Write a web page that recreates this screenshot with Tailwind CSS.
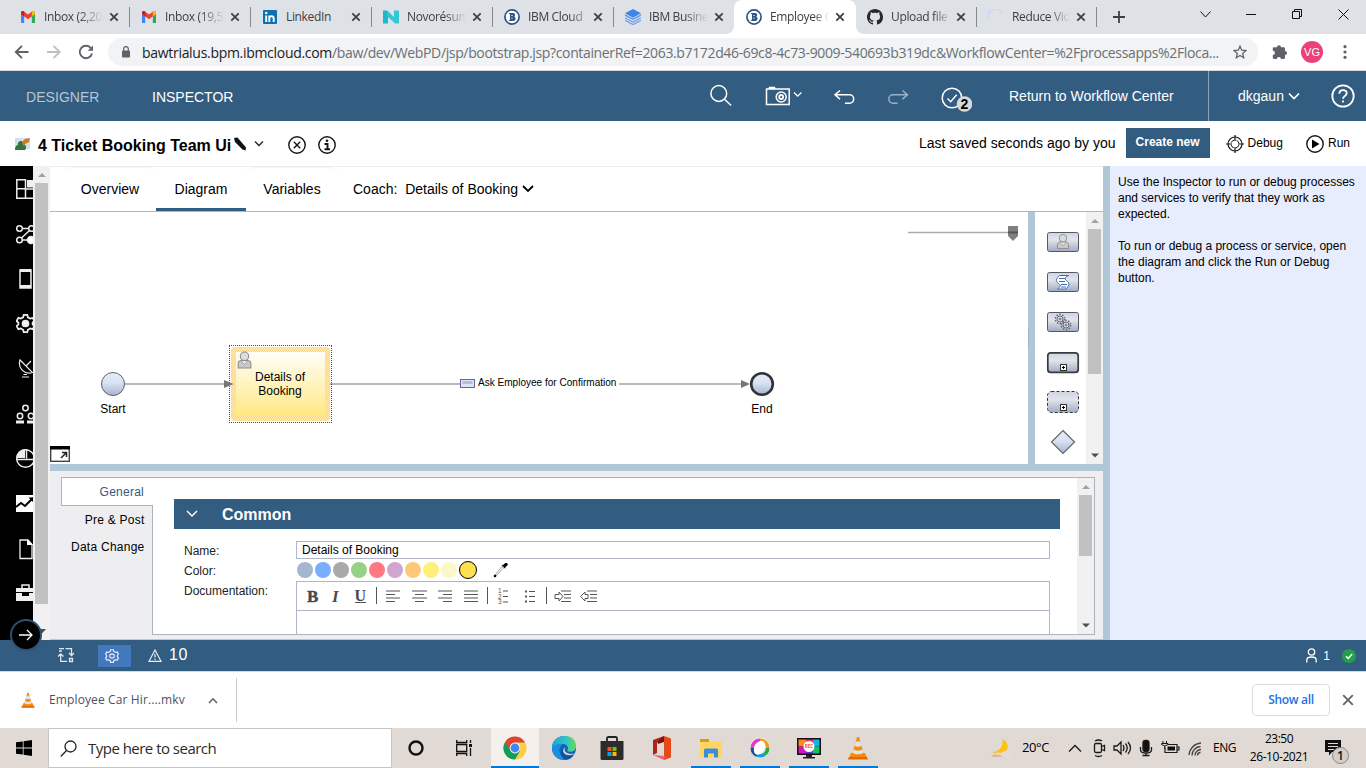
<!DOCTYPE html>
<html lang="en">
<head>
<meta charset="utf-8">
<title>Employee Car Hire</title>
<script src="https://cdn.jsdelivr.net/npm/@tailwindcss/browser@4"></script>
</head>
<body class="w-[1366px] h-[768px] overflow-hidden bg-white font-['Liberation_Sans',sans-serif] text-black">
<svg class="absolute size-0">
  <symbol id="gmail" viewBox="0 0 16 16"><path d="M1 14V4l3.2 2.4V14z" fill="#4285f4"/><path d="M11.800 14V6.400L15 4v10z" fill="#34a853"/><path d="M1 5V3.500C1 2 2.800 1.500 4 2.400L8 5.400l4-3C13.200 1.500 15 2 15 3.500V5L8 10.200z" fill="#ea4335"/><path d="M11.800 2.500C13.200 1.500 15 2 15 3.500V5l-3.200 2.400z" fill="#fbbc04"/><path d="M1 5V3.500C1 2 2.800 1.500 4.200 2.500v4.900z" fill="#c5221f"/></symbol>
  <symbol id="x" viewBox="0 0 10 10"><path d="M1.300 1.300l7.400 7.400M8.700 1.300L1.300 8.700" stroke="currentColor" stroke-width="1.800" fill="none"/></symbol>
  <symbol id="bpm" viewBox="0 0 16 16"><circle cx="8" cy="8" r="7.100" fill="#fff" stroke="#2f5486" stroke-width="1.700"/><path d="M4.500 4h4.400a2.100 2.100 0 0 1 1.500 3.700A2.300 2.300 0 0 1 9.300 12H4.500l1.500-1.500V5.500z" fill="#2f5486"/><path d="M7 6.500h2M7 9.200h2" stroke="#fff" stroke-width=".6"/></symbol>
  <symbol id="cone" viewBox="0 0 24 24"><path d="M5 17h14l2.500 6h-19z" fill="#f58a0b"/><path d="M3 21h18l1 2.500H2z" fill="#e06a00"/><path d="M11 1h2l5 18c-3 2-9 2-12 0z" fill="#f58a0b"/><path d="M9.700 5.500h4.600l1.200 4.500c-2 1-5 1-7 0zM7.600 13.500c3 1.500 6 1.500 8.800 0l1 3.500c-3 1.800-8 1.800-10.800 0z" fill="#dfe3e8"/></symbol>
  <symbol id="user" viewBox="0 0 14 17"><path d="M1 16v-4c0-2 1.500-3 3.500-3h5c2 0 3.500 1 3.500 3v4z" fill="#c9c9c9" stroke="#8b8b8b"/><path d="M4 9.500L7 13l3-3.500" fill="#e6e6e6" stroke="#999" stroke-width=".7"/><circle cx="7" cy="5" r="4" fill="#dcdcdc" stroke="#8b8b8b"/></symbol>
  <symbol id="gear" viewBox="0 0 16 16"><circle cx="8" cy="8" r="2.500"/><path d="M6.500.8h3l.5 2 2 1.100 2-.6 1.500 2.600L14 7.300v1.500l1.500 1.400-1.500 2.600-2-.6-2 1.100-.5 2h-3l-.5-2-2-1.100-2 .6L.5 10.200 2 8.800V7.300L.5 5.900 2 3.300l2 .6 2-1.100z"/></symbol>
  <linearGradient id="ev" x1="0" y1="0" x2="0" y2="1"><stop offset="0" stop-color="#e6edf9"/><stop offset=".45" stop-color="#d8e2f2"/><stop offset="1" stop-color="#a5b4cd"/></linearGradient>
</svg>

<!-- tab strip -->
<div class="flex h-[34px] bg-[#dee1e6] pl-2 font-['Open_Sans',sans-serif] text-[12px] tracking-[-0.35px] text-[#3c4043]">
  <div class="flex w-[121px] items-center pl-[12px] relative"><svg class="size-4 shrink-0"><use href="#gmail"/></svg><span class="ml-2 mr-[3px] w-[59px] overflow-hidden whitespace-nowrap [mask-image:linear-gradient(to_right,black_60%,transparent)]">Inbox (2,20</span><svg class="size-[10px] shrink-0 ml-[3px]"><use href="#x"/></svg></div>
  <div class="flex w-[121px] items-center pl-[12px] relative"><i class="absolute left-0 top-[7px] h-5 w-px bg-[#85898e]"></i><svg class="size-4 shrink-0"><use href="#gmail"/></svg><span class="ml-2 mr-[3px] w-[59px] overflow-hidden whitespace-nowrap [mask-image:linear-gradient(to_right,black_60%,transparent)]">Inbox (19,5</span><svg class="size-[10px] shrink-0 ml-[3px]"><use href="#x"/></svg></div>
  <div class="flex w-[121px] items-center pl-[12px] relative"><i class="absolute left-0 top-[7px] h-5 w-px bg-[#85898e]"></i><svg class="size-4 shrink-0" viewBox="0 0 16 16"><rect x="1" y="1" width="14" height="14" rx="1" fill="#0a72b1"/><path d="M4.200 6.500V13M7.300 13V6.500M7.300 9.500c0-3 4.400-3 4.400 0V13" stroke="#fff" stroke-width="1.900" fill="none"/><circle cx="4.200" cy="4" r="1.200" fill="#fff"/></svg><span class="ml-2 w-[62px] overflow-hidden whitespace-nowrap">LinkedIn</span><svg class="size-[10px] shrink-0 ml-[3px]"><use href="#x"/></svg></div>
  <div class="flex w-[121px] items-center pl-[12px] relative"><i class="absolute left-0 top-[7px] h-5 w-px bg-[#85898e]"></i><svg class="size-4 shrink-0" viewBox="0 0 16 16"><path d="M0 1.500h4L8.500 6v5L5 8v6.500H0z" fill="#21b8ce"/><path d="M16 14.500h-4L4 6.500V1.500L11 8V1.500h5z" fill="#35c6d6"/></svg><span class="ml-2 mr-[3px] w-[59px] overflow-hidden whitespace-nowrap [mask-image:linear-gradient(to_right,black_65%,transparent)]">Novorésum</span><svg class="size-[10px] shrink-0 ml-[3px]"><use href="#x"/></svg></div>
  <div class="flex w-[121px] items-center pl-[12px] relative"><i class="absolute left-0 top-[7px] h-5 w-px bg-[#85898e]"></i><svg class="size-4 shrink-0"><use href="#bpm"/></svg><span class="ml-2 mr-[3px] w-[59px] overflow-hidden whitespace-nowrap [mask-image:linear-gradient(to_right,black_70%,transparent_110%)]">IBM Cloud</span><svg class="size-[10px] shrink-0 ml-[3px]"><use href="#x"/></svg></div>
  <div class="flex w-[121px] items-center pl-[12px] relative"><i class="absolute left-0 top-[7px] h-5 w-px bg-[#85898e]"></i><svg class="size-4 shrink-0" viewBox="0 0 16 16"><path d="M0 11.200l8 4.300 8-4.300M0 8.700L8 13l8-4.300" fill="none" stroke="#6aa0ec" stroke-width="1.300"/><path d="M8 0l8 4.300-8 4.400L0 4.300z" fill="#3f86e6"/><path d="M0 6l8 4.300L16 6" fill="none" stroke="#4d90e8" stroke-width="1.300"/></svg><span class="ml-2 mr-[3px] w-[59px] overflow-hidden whitespace-nowrap [mask-image:linear-gradient(to_right,black_60%,transparent)]">IBM Busine</span><svg class="size-[10px] shrink-0 ml-[3px]"><use href="#x"/></svg></div>
  <div class="flex w-[122px] items-center pl-[12px] relative rounded-t-lg bg-white"><svg class="absolute -left-2 bottom-0 size-2"><path d="M8 0v8H0a8 8 0 0 0 8-8" fill="#fff"/></svg><svg class="absolute -right-2 bottom-0 size-2"><path d="M0 0v8h8a8 8 0 0 1-8-8" fill="#fff"/></svg><svg class="size-4 shrink-0"><use href="#bpm"/></svg><span class="ml-2 mr-[3px] w-[59px] overflow-hidden whitespace-nowrap [mask-image:linear-gradient(to_right,black_75%,transparent_100%)]">Employee C</span><svg class="size-[10px] shrink-0 ml-[3px]"><use href="#x"/></svg></div>
  <div class="flex w-[120px] items-center pl-[11px] relative"><svg class="size-4 shrink-0" viewBox="0 0 16 16"><path fill="#24292f" d="M8 0C3.580 0 0 3.580 0 8c0 3.540 2.290 6.530 5.470 7.590.4.070.55-.17.55-.38 0-.19-.01-.82-.01-1.490-2.010.37-2.530-.49-2.690-.94-.09-.23-.48-.94-.82-1.130-.28-.15-.68-.52-.01-.53.63-.01 1.080.58 1.230.82.72 1.210 1.870.87 2.330.66.07-.52.28-.87.51-1.070-1.780-.2-3.640-.89-3.640-3.950 0-.87.31-1.590.82-2.150-.08-.2-.36-1.020.08-2.120 0 0 .67-.21 2.200.82.64-.18 1.320-.27 2-.27s1.360.09 2 .27c1.530-1.040 2.200-.82 2.200-.82.44 1.100.16 1.920.08 2.120.51.56.82 1.270.82 2.150 0 3.070-1.870 3.750-3.650 3.950.29.25.54.73.54 1.480 0 1.070-.01 1.930-.01 2.200 0 .21.15.46.55.38A8.010 8.010 0 0 0 16 8c0-4.420-3.580-8-8-8"/></svg><span class="ml-2 mr-[5px] w-[57px] overflow-hidden whitespace-nowrap [mask-image:linear-gradient(to_right,black_75%,transparent_105%)]">Upload file</span><svg class="size-[10px] shrink-0 ml-[3px]"><use href="#x"/></svg></div>
  <div class="flex w-[121px] items-center pl-[12px] relative"><i class="absolute left-0 top-[7px] h-5 w-px bg-[#85898e]"></i><i class="absolute right-0 top-[7px] h-5 w-px bg-[#85898e]"></i><svg class="size-4 shrink-0" viewBox="0 0 16 16"><path d="M.8 10A7.200 7.200 0 0 1 14 4" fill="none" stroke="#c6d6fb" stroke-width="1.400"/></svg><span class="ml-2 mr-[3px] w-[58px] overflow-hidden whitespace-nowrap [mask-image:linear-gradient(to_right,black_65%,transparent)]">Reduce Vid</span><svg class="size-[10px] shrink-0 ml-[3px]"><use href="#x"/></svg></div>
  <svg class="size-3 mt-[11px] ml-4 shrink-0"><path d="M6 0v12M0 6h12" stroke="#3c4043" stroke-width="1.800"/></svg>
  <svg class="w-[152px] h-[34px] ml-[74px] shrink-0" fill="none" stroke="#111"><path d="M1.500 11.500l5 5.500 5-5.500M47 14.500h10M93.500 11.500h7v7h-7zM95.500 11.500v-2h7v7h-2M139.500 9.500l10 10M149.500 9.500l-10 10" /></svg>
</div>

<!-- address bar -->
<div class="flex h-9 items-center bg-white">
  <svg class="w-[108px] h-9 shrink-0" fill="none" stroke="#5f6368" stroke-width="1.900"><path d="M28.500 18h-12M22 11.800L15.800 18l6.200 6.200"/><path d="M47 18h12M53.500 11.800l6.200 6.200-6.200 6.200" stroke="#bdc1c6"/><path d="M91 14.300A6.200 6.200 0 1 0 92 19.500"/><path d="M93 11.500v5.300h-5.300z" fill="#5f6368" stroke="none"/></svg>
  <div class="flex h-7 w-[1150px] items-center rounded-full bg-[#f1f3f4] pl-[13px] font-['Open_Sans',sans-serif] text-[14px] text-[#6b6f74]">
    <svg class="w-[10px] h-3 shrink-0" viewBox="0 0 10 12"><rect x="1" y="4.500" width="8" height="7" rx="1" fill="#5f6368"/><path d="M2.700 5V3a2.300 2.300 0 0 1 4.600 0v2" fill="none" stroke="#5f6368" stroke-width="1.200"/></svg>
    <span class="ml-[11px] w-[1085px] whitespace-nowrap tracking-[-0.360px]"><span class="text-[#202124] tracking-[-0.300px]">bawtrialus.bpm.ibmcloud.com</span>/baw/dev/WebPD/jsp/bootstrap.jsp?containerRef=2063.b7172d46-69c8-4c73-9009-540693b319dc&amp;WorkflowCenter=%2Fprocessapps%2Floca...</span>
    <svg class="size-[14px] ml-[6px] shrink-0" viewBox="0 0 14 14"><path d="M7 1.200l1.700 4 4.300.4-3.300 2.900 1 4.200L7 10.500l-3.700 2.200 1-4.200L1 5.600l4.300-.4z" fill="none" stroke="#5f6368" stroke-width="1.300"/></svg>
  </div>
  <svg class="size-4 ml-[14px]" viewBox="0 0 16 16"><path d="M5 3.200a2 2 0 0 1 4 0h2.800c.8 0 1.200.5 1.200 1.200V7a2 2 0 0 1 0 4v2.800c0 .700-.5 1.200-1.200 1.200H9a2.100 2.100 0 0 0-4.200 0H2c-.700 0-1.200-.5-1.200-1.200V11a2.100 2.100 0 0 0 0-4.200V4.400c0-.700.5-1.200 1.200-1.200z" fill="#5f6368"/></svg>
  <div class="ml-[13px] flex size-[22px] items-center justify-center rounded-full bg-[#ec407a] text-[11px] text-white">VG</div>
  <svg class="w-1 h-4 ml-[20px]" fill="#5f6368"><circle cx="2" cy="2.700" r="1.600"/><circle cx="2" cy="8" r="1.600"/><circle cx="2" cy="13.300" r="1.600"/></svg>
</div>
<div class="h-px bg-[#d9dcdf]"></div>

<!-- application header -->
<div class="flex h-[50px] items-center bg-[#325c80] pl-[26px] text-[14px] text-white">
  <span class="mt-[2px] w-[126px] tracking-[0.050px] text-[#b7c6d3]">DESIGNER</span><span class="mt-[2px]">INSPECTOR</span>
  <svg class="ml-auto w-[270px] h-[50px] shrink-0" fill="none" stroke="#fff" stroke-width="1.500"><circle cx="16.800" cy="22.500" r="7.900"/><path d="M22.700 28.500l6.500 6"/><path d="M64.500 18h22.700v15.500H64.500zM67.500 18v-1.500h5V18" /><circle cx="79.200" cy="26" r="5"/><circle cx="79.200" cy="26" r="2" stroke-width="1.800"/><path d="M92 21.500l3.700 3.700 3.700-3.700" stroke-width="1.300"/><path d="M138 19.500l-5 4.300 5 4.300M133.500 23.800h14a4.200 4.200 0 0 1 0 8.400H143"/><path d="M200.500 19.500l5 4.300-5 4.300M205 23.800h-14a4.200 4.200 0 0 0 0 8.400H195.500" stroke="#9db1c2"/><circle cx="250" cy="27" r="9.800"/><path d="M245.500 27.500l3.200 3.200 6-7"/><circle cx="262.500" cy="33" r="7.800" fill="#d8d8d8" stroke="none"/><text x="262.500" y="37.700" text-anchor="middle" fill="#000" stroke="none" font-size="14" font-weight="bold">2</text></svg>
  <span class="ml-[37px] w-[199px] shrink-0">Return to Workflow Center</span>
  <div class="flex h-full w-[158px] shrink-0 items-center border-l border-[#8da4b7] pl-[29px]"><span>dkgaun</span><svg class="w-3 h-2 ml-1"><path d="M1 1.500l5 5 5-5" fill="none" stroke="#fff" stroke-width="1.700"/></svg>
  <svg class="size-6 ml-[31px]" viewBox="0 0 24 24" fill="none" stroke="#fff" stroke-width="1.800"><circle cx="12" cy="12" r="10.700"/><path d="M8.300 9.800c0-5 7.400-4.800 7.400-.6 0 2.800-3.700 2.600-3.700 5.500M12 16.500v2"/></svg></div>
</div>

<!-- title row -->
<div class="flex h-[45px] items-center pl-[15px]">
  <svg class="size-4" viewBox="0 0 16 16"><rect x="0" y="2" width="15" height="11" fill="#cfe0ef"/><path d="M0 14c0-4 2-5 3-5-1-4 5-6 6-1 2 1 3 4 1 6z" fill="#35733a"/><path d="M7 6l3-3 5-1-1 4-4 2-1 3z" fill="#d5771a"/></svg>
  <span class="ml-[7px] text-[16px] font-bold mt-[5px] whitespace-nowrap">4 Ticket Booking Team Ui</span>
  <svg class="w-3 h-4 ml-[3px] mt-px" viewBox="0 0 12 16"><path d="M0 2l3.500-.5 8.500 10-.5 3-3-1L1 6z" fill="#111"/></svg>
  <svg class="w-[10px] h-2 ml-[8px]"><path d="M1 1.500l4 4 4-4" fill="none" stroke="#222" stroke-width="1.300"/></svg>
  <svg class="w-[48px] h-[18px] ml-[24px] mt-[2px]" fill="none" stroke="#161616" stroke-width="1.400"><circle cx="9" cy="9" r="8.200"/><path d="M5.800 5.800l6.400 6.400M12.200 5.800l-6.400 6.400"/><circle cx="39" cy="9" r="8.200"/><path d="M36.500 8H39.500v5M36.500 13.200h5.500" stroke-width="1.900"/><circle cx="39" cy="4.800" r="1.300" fill="#161616" stroke="none"/></svg>
  <span class="ml-auto text-[14px] tracking-[0.020px]">Last saved seconds ago by you</span>
  <div class="-mt-[2px] ml-[10px] flex h-[30px] w-[84px] items-center justify-center bg-[#325c80] pb-[2px] text-[12px] font-bold text-white">Create new</div>
  <svg class="size-[18px] ml-[16px]" viewBox="0 0 18 18" fill="none" stroke="#161616"><circle cx="9" cy="9" r="7" stroke-width="1.200"/><circle cx="9" cy="9" r="4" stroke-dasharray="4 2.280" stroke-dashoffset="-1.100"/><path d="M9 0v6M9 12v6M0 9h6M12 9h6" stroke-width="1.200"/></svg>
  <span class="-mt-[2px] ml-1 text-[12px]">Debug</span>
  <svg class="size-[18px] ml-[23px]" viewBox="0 0 18 18"><circle cx="9" cy="9" r="8.200" fill="none" stroke="#161616" stroke-width="1.400"/><path d="M6 4.500v9L13.500 9z" fill="#000"/></svg>
  <span class="-mt-[2px] ml-1 mr-[16px] text-[12px]">Run</span>
</div>

<!-- workspace -->
<div class="flex h-[474px] relative">
  <svg class="w-[33px] h-full shrink-0 bg-black" fill="none" stroke="#ededed" stroke-width="1.500">
    <path d="M16.800 13.800h8.700v9h-8.700zM16.800 22.800h8.700v9.500h-8.700zM25.500 23h10v9.300h-10z"/><path d="M27 14h8v7.500h-8z" fill="#eee" stroke="none"/>
    <circle cx="19.500" cy="62.500" r="2.800"/><circle cx="31.500" cy="62.500" r="2.800"/><circle cx="19.500" cy="74" r="2.800"/><circle cx="31" cy="74" r="3.500" fill="#fff"/><path d="M22.500 62.500h6M22.500 74h6M21.500 72l8-7.500"/>
    <path d="M20 104h11v18H20z"/><path d="M20 104.500h11M20 120.500h11" stroke-width="3"/>
    <use href="#gear" x="16" y="148" width="19" height="19"/><circle cx="25.500" cy="157.500" r="2" fill="#fff"/>
    <path d="M20 194c-2.500 8 4 15 12.500 12.500zM26 200l5-5M22 211h7M23.500 208.500h3.500" stroke-width="1.200"/>
    <circle cx="25.500" cy="242" r="2.700"/><circle cx="20" cy="250" r="2.700"/><circle cx="31" cy="250" r="2.700"/><path d="M16 256h8M27 256h8" stroke-width="3"/>
    <circle cx="25.500" cy="292.500" r="8.800"/><path d="M25 292v-9a9 9 0 0 0-8.500 9z" fill="#eee" stroke="none"/><path d="M26.500 283v9.500M16.500 293.500h18"/>
    <path d="M16 329h18v17H16z" fill="#fff" stroke="none"/><path d="M16 341l5-4 4 3 8-8" stroke="#000" stroke-width="2"/><path d="M28.500 331.500H33V336z" fill="#000" stroke="none"/>
    <path d="M20 374h8l4 4.500v14H20z" stroke-width="1.300"/><path d="M27 373v6h6z" fill="#fff" stroke="none"/>
    <path d="M22 422v-3h7v3" /><path d="M16 422h18v4H16zM16 427h6v3h7v-3h5v8H16z" fill="#eee" stroke="none"/>
  </svg>
  <div class="w-[17px] shrink-0 bg-[#f1f1f1] flex flex-col items-center">
    <svg class="w-2 h-[17px]"><path d="M0 11h8L4 7z" fill="#a3a3a3"/></svg><div class="w-[13px] h-[421px] bg-[#c1c1c1] -ml-px"></div><svg class="w-2 h-[36px]"><path d="M0 25h8l-4 4.500z" fill="#505050"/></svg>
  </div>
  <div class="absolute left-[10px] top-[453px] z-10 flex size-[32px] items-center justify-center rounded-full border-2 border-[#2c5173] bg-black"><svg class="w-[14px] h-[12px]" fill="none" stroke="#fff" stroke-width="1.300"><path d="M0 6h13M8 1l5 5-5 5"/></svg></div>

  <div class="flex w-[1053px] shrink-0 flex-col">
    <div class="flex h-[46px] shrink-0 border-t border-t-[#ececec] border-b border-b-[#aeb6c4] text-[14px]">
      <div class="ml-[15px] flex w-[91px] items-center justify-center rounded-t-lg border-t border-[#f6f6f6] pr-px">Overview</div>
      <div class="flex w-[90px] items-center justify-center border-t-[3px] border-t-white border-b-[3px] border-b-[#325c80]">Diagram</div>
      <div class="flex w-[92px] items-center justify-center rounded-t-lg border-t border-[#f6f6f6]">Variables</div>
      <div class="ml-[15px] flex items-center whitespace-pre">Coach:  Details of Booking<svg class="w-3 h-2 ml-1"><path d="M1 1l5 5 5-5" fill="none" stroke="#000" stroke-width="1.800"/></svg></div>
    </div>
    <div class="flex h-[252px] shrink-0">
      <!-- diagram canvas -->
      <div class="relative w-[978px] shrink-0 text-[12px] leading-[14px]">
        <svg class="absolute inset-0 size-full"><path d="M75 172h105M280 172h130M569 172h125" stroke="#b9b9b9" stroke-width="2"/><path d="M858 20.500h108" stroke="#aaa" stroke-width="1.500"/><path d="M958 14h10v10l-5 5-5-5z" fill="#808080"/><path d="M958 20.500h10" stroke="#555" stroke-width="2"/><circle cx="63" cy="172" r="11.500" fill="url(#ev)" stroke="#5f6268"/><circle cx="712" cy="172" r="10.800" fill="url(#ev)" stroke="#333" stroke-width="2.600"/><path d="M691 168l9 4-9 4z" fill="#777"/>
        <rect x="410.500" y="167.500" width="14" height="8" fill="#dfe3f2" stroke="#5b68a5"/><path d="M412.500 170.500h10" stroke="#b6bdd8" stroke-width="3"/></svg>
        <div class="absolute left-[179px] top-[133px] h-[78px] w-[103px] border border-dotted border-black/70 p-px"><div class="size-full rounded border-[5px] border-[#ffe09b] bg-linear-to-b from-[#fffef8] to-[#ffe87f]"></div></div>
        <svg class="absolute left-[187px] top-[139px] h-[18px] w-[15px]"><use href="#user"/></svg>
        <svg class="absolute left-[174px] top-[167px] size-[10px]"><path d="M0 1l9.500 4L0 9z" fill="#777"/></svg>
        <div class="absolute left-[180px] top-[158px] w-[100px] text-center">Details of<br>Booking</div>
        <div class="absolute left-[33px] top-[190px] w-[60px] text-center">Start</div>
        <div class="absolute left-[682px] top-[190px] w-[60px] text-center">End</div>
        <div class="absolute left-[428px] top-[165px] text-[10px] leading-[12px] tracking-[0.020px] whitespace-nowrap">Ask Employee for Confirmation</div>
        <svg class="absolute left-0 bottom-[2px] h-4 w-5"><rect x=".7" y=".7" width="18.600" height="14.600" fill="#fff" stroke="#444" stroke-width="1.400"/><path d="M0 0h20v3.500H0z"/><path d="M11 12l5-5M12 6.500h4.500V11" stroke="#222" stroke-width="1.500" fill="none"/></svg>
      </div>
      <div class="w-[7px] shrink-0 bg-[#b0c7d7] flex items-center"><i class="w-px h-5 bg-[#9fb5c9]"></i></div>
      <svg class="h-[252px] w-[51px] shrink-0">
        <defs><linearGradient id="pg" x1="0" y1="0" x2="0" y2="1"><stop offset="0" stop-color="#cfd5e0"/><stop offset=".4" stop-color="#e0e4ec"/><stop offset="1" stop-color="#a0abc2"/></linearGradient></defs>
        <g fill="url(#pg)" stroke="#55585f"><rect x="12.500" y="20.500" width="31" height="19" rx="2"/><rect x="12.500" y="60.500" width="31" height="19" rx="2"/><rect x="12.500" y="100.500" width="31" height="19" rx="2"/><rect x="12.800" y="140.800" width="30.400" height="19.600" rx="3" stroke="#3a3a3a" stroke-width="1.700"/><rect x="12.500" y="179.500" width="31" height="21" rx="4" stroke="#333" stroke-dasharray="3 2"/></g>
        <use href="#user" x="21.500" y="21" width="13" height="17"/>
        <path d="M24.500 63.500h9c-4 2-4.500 3.500-1 6 2.500 2 1.500 4.500-1.500 7.500h-8.500c3.500-2.500 3.500-4 1-5.500-3.500-2.500-2.500-5 1-8z" fill="#fff" stroke="#3f6db5"/><path d="M24 66.500h6M24 69.500h6M26 72.500h6M26 75h5" stroke="#3f6db5"/>
        <g fill="#dfe2ea" stroke="#666b7a"><circle cx="25" cy="107" r="3"/><circle cx="31" cy="113" r="3"/><circle cx="25" cy="107" r="4.600" stroke-dasharray="1.500 1.400" stroke-width="1.600" fill="none"/><circle cx="31" cy="113" r="4.600" stroke-dasharray="1.500 1.400" stroke-width="1.600" fill="none"/><circle cx="25" cy="107" r="1"/><circle cx="31" cy="113" r="1"/></g>
        <g fill="#fff" stroke="#333"><rect x="25.500" y="152.500" width="6" height="6"/><rect x="25.500" y="192.500" width="6" height="6"/></g><path d="M28.500 154v3M27 155.500h3M28.500 194v3M27 195.500h3" stroke="#000"/>
        <path d="M28 218.500L39.500 230 28 241.500 16.500 230z" fill="url(#ev)" stroke="#666" stroke-width="1.200"/>
      </svg>
      <div class="w-[17px] shrink-0 bg-[#f1f1f1] flex flex-col items-center"><svg class="w-2 h-[17px]"><path d="M0 11h8L4 7z" fill="#a3a3a3"/></svg><div class="w-[13px] h-[145px] bg-[#c1c1c1]"></div><svg class="w-2 h-4 mt-auto"><path d="M0 5.500h8l-4 4z" fill="#505050"/></svg></div>
    </div>
    <div class="h-[7px] shrink-0 bg-[#b0c7d7]"></div>
    <!-- properties -->
    <div class="flex h-[169px] items-start bg-[#eeeef0] border-b border-[#c3c3c8] pt-[6px] pl-[11px] text-[12px]">
      <div class="z-10 flex w-[92px] shrink-0 flex-col text-right tracking-[0.250px]">
        <div class="flex h-[29px] items-center justify-end border border-r-0 border-[#aab5bb] bg-white pr-[9px] text-[#325c80]">General</div>
        <div class="flex h-[27px] items-center justify-end pr-[8.500px]">Pre &amp; Post</div>
        <div class="flex h-[27px] items-center justify-end pr-[8.500px]">Data Change</div>
      </div>
      <div class="-ml-px flex h-[158px] w-[943px] shrink-0 border border-[#aab5bb] bg-white">
        <div class="h-full flex-1 overflow-hidden pl-[21px] pt-[21px]">
          <div class="flex h-[30px] w-[886px] items-center bg-[#325c80] pl-3 text-[16px] font-bold text-white"><svg class="w-3 h-2"><path d="M1 1l5 5 5-5" fill="none" stroke="#fff" stroke-width="1.500"/></svg><span class="ml-6 mt-[2px]">Common</span></div>
          <div class="mt-3 flex pl-[10px]">
            <div class="w-[112px] leading-5 text-[#222]"><div>Name:</div><div>Color:</div><div>Documentation:</div></div>
            <div class="w-[754px]">
              <div class="flex h-[18px] items-center border border-[#b0b5c8] pl-[5px]">Details of Booking</div>
              <div class="flex h-[22px] items-center gap-[2px] pl-px"><i class="size-4 rounded-full bg-[#a5b7cf]"></i><i class="size-4 rounded-full bg-[#78aeff]"></i><i class="size-4 rounded-full bg-[#a9a9a9]"></i><i class="size-4 rounded-full bg-[#96d187]"></i><i class="size-4 rounded-full bg-[#ff7882]"></i><i class="size-4 rounded-full bg-[#d0a5ce]"></i><i class="size-4 rounded-full bg-[#ffc878]"></i><i class="size-4 rounded-full bg-[#fff07a]"></i><i class="size-4 rounded-full bg-[#faf8c8]"></i><i class="size-[18px] rounded-full border border-black bg-[#ffe04f]"></i>
              <svg class="ml-[14px] size-4" viewBox="0 0 16 16"><path d="M2 13l7-8.500 1.500 1.500-7.500 8z" fill="#fff" stroke="#888" stroke-width=".8"/><path d="M8.500 3l2-.2L12 1.200c2-1 3.500.5 2.500 2L12.500 5l-.2 1.800z"/><circle cx="2" cy="14" r="1.300"/></svg></div>
              <div class="h-[70px] border border-[#b0b5c8]"><svg class="h-[29px] w-full border-b border-[#b0b5c8]" fill="none" stroke="#555" stroke-width="1.500" font-family="Liberation Serif" font-size="17">
                <g fill="#4a4a4a" stroke="none"><text x="10" y="20" font-weight="bold" stroke="#4a4a4a" stroke-width=".4">B</text><text x="35" y="20" font-weight="bold" font-style="italic">I</text><text x="57.500" y="19" font-size="16" font-weight="bold" >U</text></g>
                <path d="M58 20.500h11M79.500 5v17M190.500 5v17M249.500 5v17" stroke-width="1"/>
                <path stroke-width="1.200" d="M89 9h14M89 12.500h9M89 16h14M89 19.500h9M115 9h15M118 12.500h9M115 16h15M118 19.500h9M141 9h14M146 12.500h9M141 16h14M146 19.500h9M167 9h14M167 12.500h14M167 16h14M167 19.500h14M206 9h5M206 14.500h5M206 20h5M232 9.500h6M232 14.500h6M232 19.500h6"/>
                <path stroke-width="1.200" d="M264 9h10M267 12.500h7M267 16h7M264 19.500h10M290 9h10M293 12.500h7M293 16h7M290 19.500h10"/>
                <path d="M228 9.500h2M228 14.500h2M228 19.500h2" stroke-width="2"/>
                <path d="M258 12.500h4v-2.500l4 4.500-4 4.500v-2.500h-4zM291 12.500h-3v-2.500l-4.500 4.500 4.500 4.500v-2.500h3z" fill="#fff" stroke-width="1"/>
                <g fill="#555" stroke="none" font-size="6.500" font-family="Liberation Sans"><text x="201" y="11">1</text><text x="201" y="16.500">2</text><text x="201" y="22">3</text></g>
              </svg></div>
            </div>
          </div>
        </div>
        <div class="w-[17px] shrink-0 bg-[#f1f1f1] flex flex-col items-center"><svg class="w-2 h-[17px]"><path d="M0 11h8L4 7z" fill="#a3a3a3"/></svg><div class="w-[13px] h-[61px] bg-[#c1c1c1]"></div><svg class="w-2 h-4 mt-auto"><path d="M0 5.500h8l-4 4z" fill="#505050"/></svg></div>
      </div>
    </div>
  </div>
  <div class="w-[7px] shrink-0 bg-[#b0c7d7]"></div>
  <div class="flex-1 bg-[#e7edfd] pl-2 pt-2 text-[12px] leading-4"><p class="whitespace-nowrap">Use the Inspector to run or debug processes<br>and services to verify that they work as<br>expected.</p><p class="mt-4">To run or debug a process or service, open<br>the diagram and click the Run or Debug<br>button.</p></div>
</div>

<!-- status bar -->
<div class="flex h-[31px] items-center bg-[#325c80] text-white">
  <svg class="ml-[58px] mb-px size-4" fill="none" stroke="#dfe6ec" stroke-width="1.300"><path d="M1 1.700h5M7.500 1.700h6V8M11 6l2.500 2.500L16 6M1 4h3M9 14.300H2.700V7M0 9.500L2.700 7l2.800 2.500M11.500 11.500h3v3h-3z"/></svg>
  <div class="ml-6 flex h-[22px] w-[33px] items-center bg-[#4178be] pl-[7px]"><svg class="size-[14px]" fill="none" stroke="#eef" stroke-width="1.300"><use href="#gear"/></svg></div>
  <svg class="ml-[17px] mb-px h-[13px] w-[14px]" fill="none" stroke="#e8eef2" stroke-width="1.200"><path d="M7 1l6 11.300H1zM7 5v3.500M7 9.700v1.300"/></svg>
  <span class="ml-[7px] mb-[2px] text-[16px] tracking-[0.500px]">10</span>
  <svg class="ml-auto h-[15px] w-[11px]" fill="none" stroke="#fff" stroke-width="1.300"><circle cx="5.500" cy="4" r="3.200"/><path d="M.8 14.500V12c0-2.500 1.500-3 4.700-3s4.700.5 4.700 3v2.500"/></svg>
  <span class="ml-[6px] text-[12px]">1</span>
  <svg class="ml-3 mr-[10px] size-[14px]"><circle cx="7" cy="7" r="7" fill="#24a148"/><path d="M4 7.200l2.200 2.200L10.200 5" fill="none" stroke="#fff" stroke-width="1.500"/></svg>
</div>

<!-- download shelf -->
<div class="flex h-[57px] items-center border-t border-[#d6d9dc] font-['Open_Sans',sans-serif] text-[12px]">
  <svg class="ml-[20px] size-4"><use href="#cone"/></svg>
  <span class="ml-[13px] w-[136px] shrink-0 whitespace-nowrap tracking-[0.120px] text-[#4c5063]">Employee Car Hir....mkv</span>
  <svg class="ml-[23px] h-[7px] w-[10px]"><path d="M1 6l4-4.200L9 6" fill="none" stroke="#5f6368" stroke-width="1.600"/></svg>
  <i class="ml-[18px] h-11 w-px bg-[#c9ccd0]"></i>
  <div class="ml-auto flex h-8 w-[78px] items-center justify-center rounded border border-[#dadce0] font-semibold tracking-[-0.300px] text-[#1a73e8]">Show all</div>
  <svg class="ml-3 mr-3 size-3" viewBox="0 0 10 10"><path d="M1 1l8 8M9 1L1 9" stroke="#5f6368" stroke-width="1.500"/></svg>
</div>

<!-- taskbar -->
<div class="flex h-10 bg-[#e0d9d4] font-['Open_Sans',sans-serif]">
  <svg class="ml-4 mt-3 size-4 shrink-0"><path d="M0 2.300L6.800 1.400v6.200H0zM7.600 1.300L16 0v7.600H7.600zM0 8.400h6.800v6.200L0 13.700zM7.600 8.400H16V16l-8.400-1.200z"/></svg>
  <div class="ml-4 flex w-[344px] items-center border border-[#c7c5c3] bg-white pl-[11px] text-[15px] text-[#2b2b2b]"><svg class="size-[17px]" fill="none" stroke="#222" stroke-width="1.300"><circle cx="10.500" cy="6.500" r="5.500"/><path d="M6.500 10.500L.8 16.500"/></svg><span class="ml-[11px] tracking-[-0.520px]">Type here to search</span></div>
  <svg class="ml-[16px] mt-3 size-4 shrink-0"><circle cx="8" cy="8" r="6.500" fill="none" stroke="#111" stroke-width="2.400"/></svg>
  <svg class="ml-[32px] mt-3 h-4 w-[17px] shrink-0" fill="none" stroke="#111" stroke-width="1.300"><path d="M.7 0v2.500h10V0M.7 16v-2.500h10V16M.7 4.500h10v7H.7zM14.500 0v3M14.500 8v8"/><path d="M13 4h3v3h-3z" fill="#111" stroke="none"/></svg>
  <div class="ml-[18px] flex w-12 justify-center bg-[#f3f0ee] border-b-2 border-[#0078d7] pt-2"><svg class="size-6" viewBox="0 0 24 24"><circle cx="12" cy="12" r="11.500" fill="#ffcd40"/><path d="M12 12L2 6.200A11.500 11.500 0 0 0 12 23.500L17 15z" fill="#0f9d58"/><path d="M2 6.200A11.500 11.500 0 0 1 22 6.500H12L7 14.500z" fill="#db4437"/><circle cx="12" cy="12" r="5.400" fill="#f1f1f1"/><circle cx="12" cy="12" r="4.400" fill="#4285f4"/></svg></div>
  <svg class="ml-[13px] mt-2 size-6 shrink-0" viewBox="0 0 24 24"><defs><linearGradient id="eg"><stop offset="0" stop-color="#1fa5e0"/><stop offset=".6" stop-color="#34c5c0"/><stop offset="1" stop-color="#66dd55"/></linearGradient></defs><circle cx="12" cy="12" r="12" fill="#1064b8"/><path d="M0 11C1-3 24-4 24 10c0 5-5 7-9 5 2-2 1-7-4-7C5 8 2 10 0 12z" fill="url(#eg)"/><path d="M11 8c-6 4-5 12 4 15.500C7 25 0 20 0 12 2 9 6 7 11 8z" fill="#1b8ede"/><path d="M13.500 11c-3 4 2 8.500 9 6.500-1 2-3 3.500-4.500 4.500-7 0-9-8-4.500-11z" fill="#e0d9d4"/><path d="M11 13c-1 5 5 8 11 5-2 4-5 6-9 5.500C8 21 8 15 11 13z" fill="#0c54a0"/></svg>
  <svg class="ml-[24px] mt-2 size-6 shrink-0" viewBox="0 0 24 24"><path d="M7 7V2.500Q7 1 8.500 1h7Q17 1 17 2.500V7" fill="none" stroke="#222" stroke-width="1.800"/><path d="M.5 5h23v17.500Q23.500 24 22 24H2Q.5 24 .5 22.500z" fill="#2c2c2c"/><path d="M7.500 11h4v4h-4z" fill="#f25022"/><path d="M12.500 11h4v4h-4z" fill="#7fba00"/><path d="M7.500 16h4v4h-4z" fill="#00a4ef"/><path d="M12.500 16h4v4h-4z" fill="#ffb900"/></svg>
  <svg class="ml-[28px] mt-2 h-6 w-5 shrink-0" viewBox="0 0 20 24"><path d="M12 0l7 2.500v19L12 24z" fill="#e64a19"/><path d="M12 0L1 4v15l4-2V7l7-2z" fill="#b02318"/><path d="M1 19l11 5 1-4z" fill="#ef5f7b"/><path d="M12 0v6L6 8V5z" fill="#7d1414"/></svg>
  <div class="ml-[19px] flex w-10 justify-center border-b-2 border-[#0078d7] pt-2"><svg class="size-6" viewBox="0 0 24 24"><path d="M1 3.500h9l1 2H23v16H1z" fill="#ffd563"/><path d="M1 3h9v3H1z" fill="#d99d12"/><path d="M5 21.500V14q0-1.500 1.500-1.500h11Q19 12.500 19 14v7.500h-4v-4H9v4z" fill="#3a8fd6"/></svg></div>
  <div class="ml-[9px] flex w-10 justify-center border-b-2 border-[#0078d7] pt-2"><svg class="size-6" viewBox="0 0 24 24"><g fill="none" stroke-width="4"><path d="M12 4a8 8 0 0 0-8 8" stroke="#e03cc8"/><path d="M4 12a8 8 0 0 0 5 7.400" stroke="#1d4f91"/><path d="M9 19.400a8 8 0 0 0 8-1.200" stroke="#12a0d0"/><path d="M17 18.200A8 8 0 0 0 20 12" stroke="#28a84a"/><path d="M20 12a8 8 0 0 0-8-8" stroke="#f39c1c"/></g><circle cx="12" cy="12" r="10" fill="none" stroke="#f4f1ee" stroke-width=".8"/><ellipse cx="11.500" cy="12" rx="5" ry="7.500" transform="rotate(30 12 12)" fill="#fff"/></svg></div>
  <div class="ml-[9px] flex w-10 justify-center border-b-2 border-[#0078d7] pt-2"><svg class="size-6" viewBox="0 0 24 24"><path d="M0 2h24v17H0z" fill="#111"/><path d="M1.500 3.500H9v7H1.500z" fill="#ff8a1c"/><path d="M9 3.500h7v7H9z" fill="#f62d65"/><path d="M16 3.500h6.500v7H16z" fill="#0bb7e8"/><path d="M1.500 10.500H9v7H1.500z" fill="#d414c4"/><path d="M9 10.500h7v7H9z" fill="#6a33d8"/><path d="M16 10.500h6.500v7H16z" fill="#12c25c"/><circle cx="12" cy="10.500" r="5.500" fill="#fff"/><text x="12" y="12.300" font-size="4.500" font-weight="bold" text-anchor="middle" fill="#e53">REC</text><path d="M9 19h6v2h3v1.500H6V21h3z" fill="#222"/></svg></div>
  <div class="ml-[9px] flex w-10 justify-center border-b-2 border-[#0078d7] pt-2"><svg class="size-6"><use href="#cone"/></svg></div>
  <svg class="ml-[112px] mt-[10px] h-5 w-6 shrink-0"><path d="M12.500 1c8 4 7 14-4 14.500-3 0-5-.5-6-1.500 8-1 11-6 10-13z" fill="#fcc314"/><path d="M5 17c0-2.500 4-3.500 6-1.500 1-3 7-3 7 0 4-1 6 1 4 2.500C20 19 9 19.500 5 18z" fill="#e8dcd2"/><path d="M1 17.500c3-1.500 8-1 12 .5-4 1.500-10 1.500-12-.5z" fill="#d3b7a1"/></svg>
  <span class="ml-2 w-[29px] shrink-0 self-center whitespace-nowrap text-[13px] tracking-[-0.400px]">20°C</span>
  <svg class="ml-[17px] h-10 w-[138px] shrink-0" fill="none" stroke="#1a1a1a" stroke-width="1.300"><path d="M1 23.500l6-6 6 6"/><rect x="26.500" y="15.500" width="7" height="9" rx="1.500"/><path d="M33.500 18.500l3-1v5l-3-1M27 13q3.500-2 7 0M27 27.500q3.500 2 7 0"/><path d="M46 18h3l4-4v12l-4-4h-3zM55 17q2 3 0 6M57.500 15.500q3.500 4.500 0 9M60 14q5 6 0 12"/><rect x="75" y="12.500" width="6" height="11" rx="2.500" fill="#111"/><path d="M72.500 19v3q0 3 5.500 3t5.500-3v-3M78 25v2.500M74.500 27.500h7"/><path d="M100 16.500h9v8h-12v-5M109 19h2v3h-2" stroke-width="1.200"/><path d="M95 13v2M98.500 13v2M93.500 15.500h6.500v1q-3 3-6.500 0zM96.700 18v3" stroke-width="1"/><path d="M99.500 18.500h7.500v4h-7.500z" fill="#111" stroke="none"/><path d="M121 27a13 13 0 0 1 12-12M124 27.500a9 9 0 0 1 8.500-9M127 27.500a6 6 0 0 1 6-6M129.500 27.500a3 3 0 0 1 3-3" stroke="#444"/></svg>
  <span class="ml-[7px] w-[24px] shrink-0 self-center text-[12px] tracking-[-0.500px]">ENG</span>
  <div class="ml-[7px] w-[70px] shrink-0 pt-[2px] text-center text-[12px] leading-[18px] whitespace-nowrap"><span class="tracking-[-0.500px]">23:50</span><br><span class="tracking-[-0.420px]">26-10-2021</span></div>
  <svg class="ml-[11px] mt-[10px] h-7 w-7 shrink-0"><path d="M0 2h16v12H7l-3 3.500V14H0z" fill="#111"/><path d="M3 5.500h10M3 8.500h10M3 11.500h6" stroke="#e0d9d4"/><circle cx="15.500" cy="17.500" r="8" fill="#d3cec9" stroke="#888"/><text x="15.500" y="21.500" font-size="12" font-weight="600" text-anchor="middle" fill="#111">1</text></svg>
</div>
</body>
</html>
